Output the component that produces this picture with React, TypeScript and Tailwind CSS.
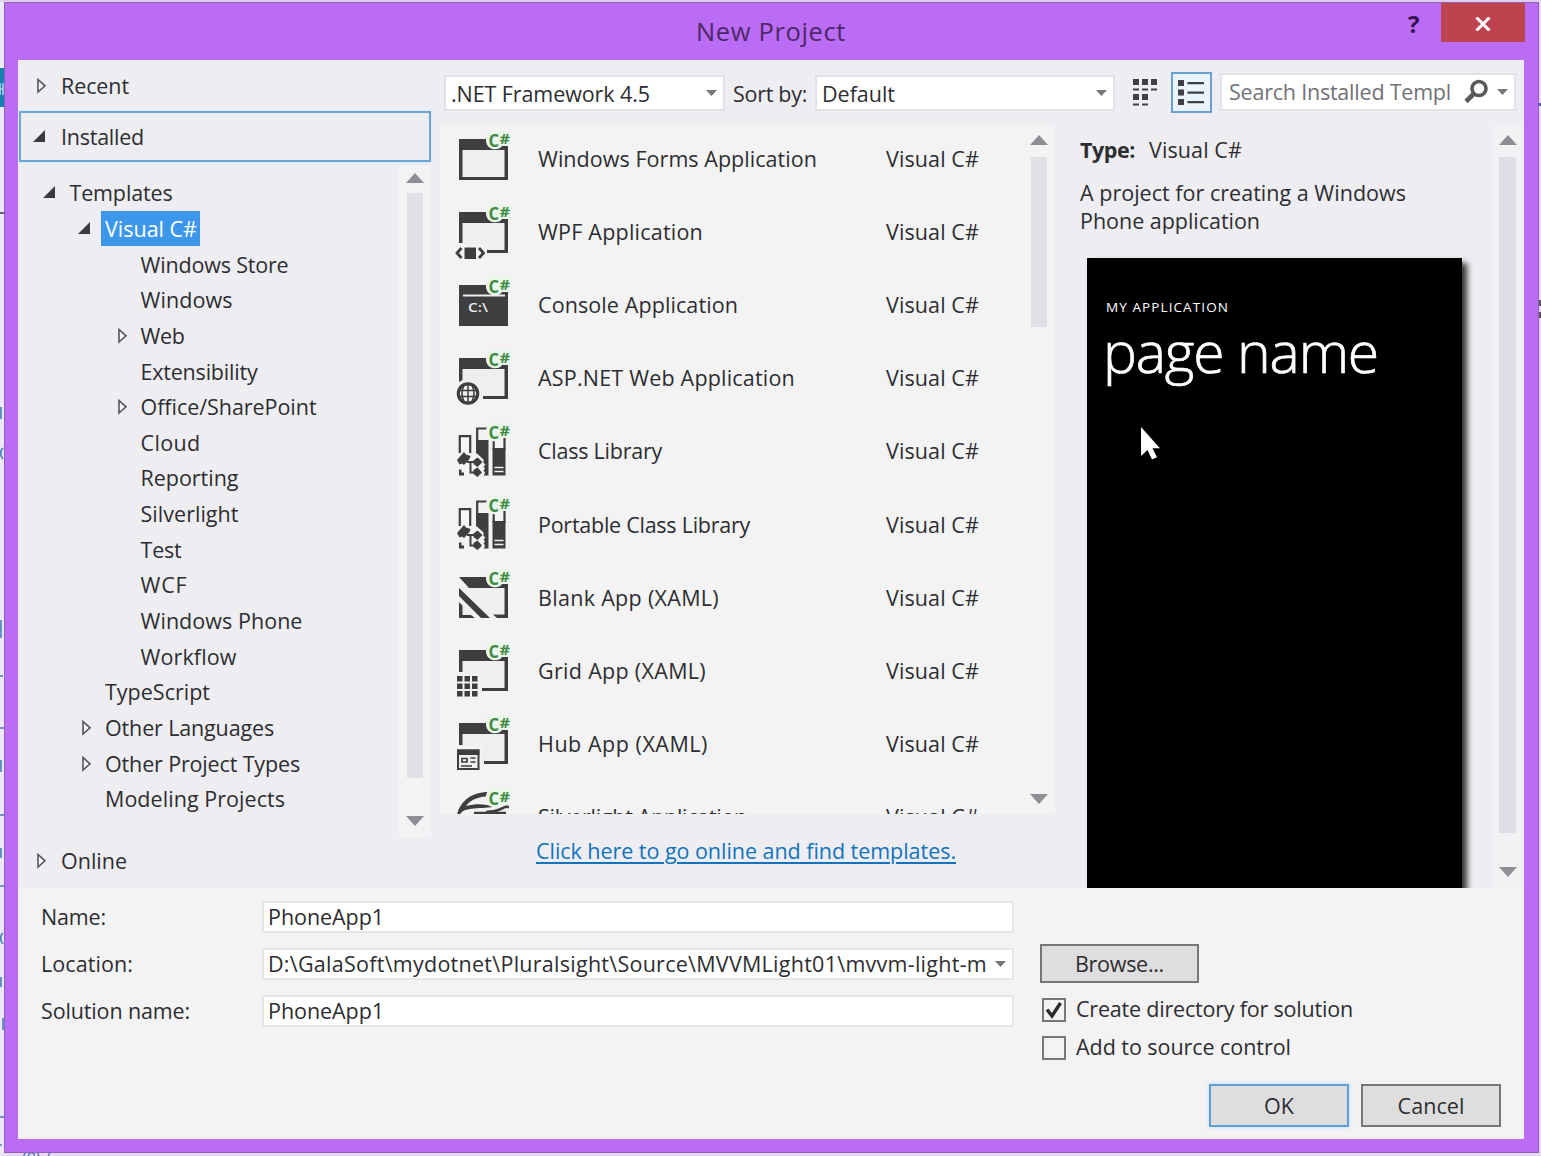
import { useLayoutEffect, useRef, type ReactNode } from "react";

/* Text whose tracking is tuned so that it fills a given width. */
function T({ w, className = "", children }: { w: number; className?: string; children: string }) {
  const ref = useRef<HTMLSpanElement>(null);
  useLayoutEffect(() => {
    const el = ref.current;
    if (!el) return;
    el.style.letterSpacing = "0px";
    const natural = el.getBoundingClientRect().width;
    el.style.letterSpacing = `${(w - natural) / children.length}px`;
  }, [w, children]);
  return (
    <span ref={ref} className={`inline-block shrink-0 whitespace-pre ${className}`}>
      {children}
    </span>
  );
}

function Twisty({ state }: { state?: "open" | "closed" }) {
  return (
    <svg width="28" height="16" viewBox="0 0 28 16" className="shrink-0">
      {state === "open" && <path d="M13 1v12H1z" fill="#3b3b3f" />}
      {state === "closed" && <path d="M6 1.500v12.500l7-6.200z" fill="#f6f6f8" stroke="#55555a" strokeWidth="1.600" />}
    </svg>
  );
}

function Arrow({ up = false }: { up?: boolean }) {
  return (
    <svg width="18" height="10" viewBox="0 0 18 10" className="shrink-0">
      <path d={up ? "M0 10L9 0l9 10z" : "M0 0h18L9 10z"} fill="#8e8e93" />
    </svg>
  );
}

function Caret() {
  return (
    <svg width="11" height="6" viewBox="0 0 11 6" className="shrink-0">
      <path d="M0 0h11L5.500 6z" fill="#77777b" />
    </svg>
  );
}

const DARK = "#3e3e40";

function Frame({ d }: { d: string }) {
  return (
    <>
      <path d="M5 9h49v41H5z" fill="#efeff0" />
      <path d={d} fill={DARK} />
    </>
  );
}

function Books() {
  return (
    <g>
      <path d="M5.800 31V14.200h10.400V31" fill="#f6f6f6" stroke={DARK} strokeWidth="2.200" />
      <path d="M23.200 20V6.500H34" fill="none" stroke={DARK} strokeWidth="2.200" />
      <path d="M22 18h12.500v35.500H22z" fill={DARK} />
      <path d="M39.700 28V14M50.500 28V14" stroke={DARK} strokeWidth="2.200" />
      <path d="M38.500 26h13v27.500h-13z" fill={DARK} />
      <path d="M40.500 45.500h9M40.500 49.500h9" stroke="#f3f3f4" strokeWidth="1.600" />
      <path d="M20 31.500h3l6.500 6v3.500l2 1.500-2 2 1.500 2-1.500 2 1.500 2-1.500 4H18z" fill="#f3f3f4" />
      <path d="M3 38l7-8 2 2.500 4.500 1.500-1 3-5.500 6-2-1.500-2.500 1z" fill={DARK} />
      <path d="M13 40h9M16.500 40v10.500H22" fill="none" stroke={DARK} strokeWidth="2" />
      <path d="M19.500 38.500l4-3 5 4.500-5 5-4-3zM19.500 48l4-2.500 4.500 5-4.500 4.500-4-3zM5 47.500h2.500v3H10v3H5z" fill={DARK} />
    </g>
  );
}

const GLYPHS: Record<string, ReactNode> = {
  forms: <Frame d="M5 9h49v41H5zM8.500 20v27h42V20z" />,
  wpf: (
    <>
      <Frame d="M5 9h49v41H33v-3h17.500V20h-42v20H5z" />
      <path d="M0 41h33v15H0z" fill="#f3f3f4" />
      <path d="M10.500 44.500h11.500V56H10.500z" fill={DARK} />
      <path d="M7.500 45l-4.500 5 4.500 5M25 45l4.500 5-4.500 5" fill="none" stroke={DARK} strokeWidth="2.800" />
    </>
  ),
  console: (
    <>
      <path d="M5 9h49v41H5z" fill={DARK} />
      <path d="M9 19.500h42" stroke="#eee" strokeWidth="1.800" />
      <text x="14" y="35.500" className="font-['Open_Sans'] text-[13px] font-semibold" fill="#ededed" textLength="20" lengthAdjust="spacingAndGlyphs">
        C:\
      </text>
    </>
  ),
  web: (
    <>
      <Frame d="M5 9h49v41H29v-3h21.500V20h-42v11L5 33z" />
      <circle cx="14" cy="44.500" r="13" fill="#f3f3f4" />
      <circle cx="14" cy="44.500" r="9.700" fill="#efeff0" stroke={DARK} strokeWidth="3.200" />
      <path d="M5 41.500h18M5 47.500h18M14 36v17M10 36.500c-2.500 5-2.500 11 0 16M18 36.500c2.500 5 2.500 11 0 16" fill="none" stroke={DARK} strokeWidth="1.500" />
    </>
  ),
  library: <Books />,
  blank: (
    <>
      <path d="M8 19h43v28H8z" fill="#efeff0" />
      <path d="M5 9h49v41H43l-4-3.500h11.500V20H15zM5 20l31 30h-9L5 28zM5 34l3.500 3.500V47H17l4 3H5z" fill={DARK} />
    </>
  ),
  grid: (
    <>
      <Frame d="M5 9h49v41H28v-3h22.500V20h-42v11H5z" />
      <path d="M0 33h26v25H0z" fill="#f3f3f4" />
      <path
        d="M3 35h5.500v5.500H3zM10.500 35H16v5.500h-5.500zM18 35h5.500v5.500H18zM3 42.500h5.500V48H3zM10.500 42.500H16V48h-5.500zM18 42.500h5.500V48H18zM3 50h5.500v5.500H3zM10.500 50H16v5.500h-5.500zM18 50h5.500v5.500H18z"
        fill={DARK}
      />
    </>
  ),
  hub: (
    <>
      <Frame d="M5 9h49v41H30v-3h20.500V20h-42v11H5z" />
      <path d="M0 32h28v26H0z" fill="#f3f3f4" />
      <path d="M4 36.500h20.500v18.500H4z" fill="#efeff0" stroke={DARK} strokeWidth="2" />
      <path d="M3 35.500h22.500V41H3z" fill={DARK} />
      <path d="M8 44.500h5v3.500H8zM16.500 44h5M16.500 48h5M7 52h11" fill="none" stroke={DARK} strokeWidth="1.700" />
    </>
  ),
  silverlight: (
    <>
      <path d="M3 27C6 13 18 4 34 4l-2 4.500C23 9 15 13 12 18c8-2 14-2 21-1l6 2-10 1c-8 0-16 1-20 3l-4 4z" fill={DARK} />
      <path d="M32 24c8 0 13-2 17-4 3-2 5-1 6-1M20 25h32" stroke={DARK} strokeWidth="2.600" fill="none" />
    </>
  ),
};

function TemplateIcon({ kind }: { kind: string }) {
  return (
    <svg width="60" height="60" viewBox="0 0 60 60" className="shrink-0 overflow-visible">
      {GLYPHS[kind]}
      <path d="M36 1h21v15h-9c-3 5-15 5-16-5 0-5 1-8 4-10z" fill="#ebf6ea" />
      <g className="font-['Open_Sans'] font-bold" fill="#3f8a45">
        <text x="34.500" y="16.500" className="text-[17.500px]" textLength="10.500" lengthAdjust="spacingAndGlyphs">
          C
        </text>
        <text x="45.500" y="13.500" className="text-[14px]" textLength="10.500" lengthAdjust="spacingAndGlyphs">
          #
        </text>
      </g>
    </svg>
  );
}

type Node = { label: string; w: number; pad: string; state?: "open" | "closed"; selected?: boolean };

const L0 = "pl-[23.500px]";
const L1 = "pl-[59px]";
const L2 = "pl-[94.500px]";

const TREE: Node[] = [
  { label: "Templates", w: 103, pad: L0, state: "open" },
  { label: "Visual C#", w: 92, pad: L1, state: "open", selected: true },
  { label: "Windows Store", w: 148, pad: L2 },
  { label: "Windows", w: 92, pad: L2 },
  { label: "Web", w: 44, pad: L2, state: "closed" },
  { label: "Extensibility", w: 117, pad: L2 },
  { label: "Office/SharePoint", w: 176, pad: L2, state: "closed" },
  { label: "Cloud", w: 60, pad: L2 },
  { label: "Reporting", w: 98, pad: L2 },
  { label: "Silverlight", w: 98, pad: L2 },
  { label: "Test", w: 41, pad: L2 },
  { label: "WCF", w: 47, pad: L2 },
  { label: "Windows Phone", w: 162, pad: L2 },
  { label: "Workflow", w: 96, pad: L2 },
  { label: "TypeScript", w: 105, pad: L1 },
  { label: "Other Languages", w: 169, pad: L1, state: "closed" },
  { label: "Other Project Types", w: 195, pad: L1, state: "closed" },
  { label: "Modeling Projects", w: 180, pad: L1 },
];

const TEMPLATES = [
  { label: "Windows Forms Application", w: 279, icon: "forms" },
  { label: "WPF Application", w: 165, icon: "wpf" },
  { label: "Console Application", w: 200, icon: "console" },
  { label: "ASP.NET Web Application", w: 257, icon: "web" },
  { label: "Class Library", w: 124, icon: "library" },
  { label: "Portable Class Library", w: 212, icon: "library" },
  { label: "Blank App (XAML)", w: 181, icon: "blank" },
  { label: "Grid App (XAML)", w: 168, icon: "grid" },
  { label: "Hub App (XAML)", w: 170, icon: "hub" },
  { label: "Silverlight Application", w: 209, icon: "silverlight" },
];

function Sidebar() {
  return (
    <div className="flex w-[422px] shrink-0 flex-col">
      <div className="flex h-[51px] items-center pl-[14px]">
        <Twisty state="closed" />
        <T w={68} className="ml-px">Recent</T>
      </div>
      <div className="ml-px flex h-[51px] w-[412px] items-center border-2 border-[#6ca5d6] pl-[11px] shadow-[0_0_3px_#c5e4ff]">
        <Twisty state="open" />
        <T w={83} className="ml-px">Installed</T>
      </div>
      <div className="flex h-[676px]">
        <div className="flex-1 pt-[13.500px]">
          {TREE.map((n) => (
            <div key={n.label} className={`flex h-[35.650px] items-center ${n.pad}`}>
              <Twisty state={n.state} />
              {n.selected ? (
                <div className="-ml-[4px] flex h-[35px] w-[99px] items-center bg-[#3c96ea] pl-[4px] text-white">
                  <T w={n.w}>{n.label}</T>
                </div>
              ) : (
                <T w={n.w}>{n.label}</T>
              )}
            </div>
          ))}
        </div>
        <div className="mt-1 mr-[9px] flex w-[32px] flex-col items-center bg-[#f3f3f5] pt-[7px]">
          <Arrow up />
          <div className="mt-[10px] h-[585px] w-[16px] bg-[#e0e0e5]" />
          <div className="mt-[38px] flex">
            <Arrow />
          </div>
        </div>
      </div>
      <div className="flex h-[46px] items-center pl-[14px]">
        <Twisty state="closed" />
        <T w={66} className="ml-px">Online</T>
      </div>
    </div>
  );
}

function Toolbar() {
  return (
    <div className="flex h-[65px] items-start pt-[12px] pl-[4px]">
      <div className="mt-[3px] flex h-[36px] w-[281px] items-center justify-between border-2 border-[#e0e0e6] bg-white pr-[6px] pl-[5px]">
        <T w={199} className="pt-px">.NET Framework 4.5</T>
        <Caret />
      </div>
      <T w={74} className="mt-[7px] ml-[8px] leading-[30px]">Sort by:</T>
      <div className="mt-[3px] ml-[8px] flex h-[36px] w-[300px] items-center justify-between border-2 border-[#e0e0e6] bg-white pr-[6px] pl-[5px]">
        <T w={73} className="pt-px">Default</T>
        <Caret />
      </div>
      <svg width="26" height="28" viewBox="0 0 26 28" className="mt-[7px] ml-[18px] shrink-0" fill="#3f3f44">
        <path d="M0 0h6v6H0zM9 0h6v6H9zM18 0h6v6h-6zM0 9.500h6v2H0zM9 9.500h6v2H9zM18 9.500h6v2h-6zM0 15h6v6H0zM9 15h6v6H9zM0 24.500h6v2H0zM9 24.500h6v2H9z" />
      </svg>
      <div className="ml-[12px] flex h-[41px] w-[41px] items-center justify-center border-2 border-[#6a9fd0] bg-[#eaf4fe]">
        <svg width="27" height="26" viewBox="0 0 27 26" fill="#3f3f44">
          <path d="M0 0h6v6H0zM0 9.500h6v6H0zM0 19h6v6H0zM9.500 2H26v2.200H9.500zM9.500 11.500H26v2.200H9.500zM9.500 21H26v2.200H9.500z" />
        </svg>
      </div>
      <div className="mt-px ml-[8px] flex h-[38px] w-[296px] items-center border-2 border-[#e2e2e8] bg-white pl-[7px] text-[#717176]">
        <T w={222}>Search Installed Templ</T>
        <svg width="26" height="26" viewBox="0 0 26 26" className="ml-[12px] shrink-0" fill="none" stroke="#5a5a5e">
          <circle cx="16" cy="9.500" r="7" strokeWidth="3.600" />
          <path d="M11 14.500L3 22.500" strokeWidth="4.600" />
        </svg>
        <div className="ml-[8px]">
          <Caret />
        </div>
      </div>
    </div>
  );
}

function TemplateList() {
  return (
    <div className="flex w-[615px] shrink-0 flex-col">
      <div className="flex h-[689px] overflow-hidden bg-[#f3f3f4]">
        <div className="-mt-[2px] w-[585px]">
          {TEMPLATES.map((t) => (
            <div key={t.label} className="flex h-[73.120px] items-center pl-[14px]">
              <TemplateIcon kind={t.icon} />
              <div className="-mt-px ml-[24px] w-[348px]">
                <T w={t.w}>{t.label}</T>
              </div>
              <T w={93} className="-mt-px">Visual C#</T>
            </div>
          ))}
        </div>
        <div className="flex w-[28px] flex-col items-center pt-[10px]">
          <Arrow up />
          <div className="mt-[12px] h-[170px] w-[16px] bg-[#dfdfe4]" />
          <div className="mt-[467px] flex">
            <Arrow />
          </div>
        </div>
      </div>
      <div className="flex h-[74px] items-center pl-[96px] text-[#1173bd]">
        <T w={420} className="underline decoration-2 underline-offset-[3px]">Click here to go online and find templates.</T>
      </div>
    </div>
  );
}

function Details() {
  return (
    <div className="flex flex-1 overflow-hidden">
      <div className="w-[437px] pt-[10px] pl-[25px]">
        <div className="flex h-[30px] items-center">
          <T w={55} className="font-bold">Type:</T>
          <T w={93} className="ml-[14px]">Visual C#</T>
        </div>
        <div className="mt-[14px] flex flex-col items-start leading-[28px]">
          <T w={326}>A project for creating a Windows</T>
          <T w={180}>Phone application</T>
        </div>
        <div className="relative mt-[23px] ml-[7px] flex h-[700px] w-[375px] flex-col items-start bg-black pl-[19px] text-white shadow-[5px_5px_6px_#333]">
          <T w={123} className="mt-[39px] text-[13.500px] leading-[20px]">MY APPLICATION</T>
          <T w={275} className="-mt-[3px] -ml-[3px] text-[57px] leading-[74px] font-light [-webkit-text-stroke:0.700px_white]">page name</T>
          <svg width="21" height="33" viewBox="0 0 21 33" className="absolute top-[169px] left-[54px]" fill="#fff">
            <path d="M0 0v29l6.500-6 4.500 9.500 5-2.200-4.500-9H19z" />
          </svg>
        </div>
      </div>
      <div className="flex w-[31px] flex-col items-center bg-[#f2f2f5] pt-[10px]">
        <Arrow up />
        <div className="mt-[12px] h-[676px] w-[17px] bg-[#dddee6]" />
        <div className="mt-[34px] flex">
          <Arrow />
        </div>
      </div>
    </div>
  );
}

function Field({ label, lw, value, vw, combo = false }: { label: string; lw: number; value: string; vw: number; combo?: boolean }) {
  return (
    <div className="flex h-[31px] items-center">
      <div className="w-[221px]">
        <T w={lw}>{label}</T>
      </div>
      <div className="flex h-[32px] w-[752px] items-center justify-between border-2 border-[#e6e6e8] bg-white pr-[6px] pl-[4px]">
        <T w={vw}>{value}</T>
        {combo && <Caret />}
      </div>
    </div>
  );
}

function CheckBox({ checked = false, label, w }: { checked?: boolean; label: string; w: number }) {
  return (
    <div className="flex h-[38px] items-center pl-[2px]">
      <div className="mt-[2px] flex size-[24px] items-center justify-center border-2 border-[#77777b] bg-[#f3f3f6]">
        {checked && (
          <svg width="18" height="18" viewBox="0 0 18 18" fill="none" stroke="#2b2b2e">
            <path d="M2 8.500l5 6.500L15.500 2" strokeWidth="3.400" />
          </svg>
        )}
      </div>
      <T w={w} className="ml-[10px]">{label}</T>
    </div>
  );
}

function Form() {
  return (
    <div className="flex h-[251px] flex-col bg-[#f3f3f4]">
      <div className="flex pt-[13px] pl-[23px]">
        <div className="flex flex-col gap-[16px]">
          <Field label="Name:" lw={65} value="PhoneApp1" vw={116} />
          <Field label="Location:" lw={92} value={"D:\\GalaSoft\\mydotnet\\Pluralsight\\Source\\MVVMLight01\\mvvm-light-m"} vw={719} combo />
          <Field label="Solution name:" lw={149} value="PhoneApp1" vw={116} />
        </div>
        <div className="ml-[26px] flex flex-col pt-[43px]">
          <button className="flex h-[39px] w-[159px] items-center justify-center border-2 border-[#75757a] bg-[#dedede]">
            <T w={89}>Browse...</T>
          </button>
          <div className="mt-[7px] flex flex-col">
            <CheckBox checked label="Create directory for solution" w={277} />
            <CheckBox label="Add to source control" w={215} />
          </div>
        </div>
      </div>
      <div className="mt-[18px] flex justify-end gap-[12px] pr-[23px]">
        <button className="flex h-[43px] w-[140px] items-center justify-center border-2 border-[#5f9fd6] bg-[#dedede] shadow-[0_0_4px_#b5ddff]">
          <T w={30}>OK</T>
        </button>
        <button className="flex h-[43px] w-[140px] items-center justify-center border-2 border-[#75757a] bg-[#dedede]">
          <T w={67}>Cancel</T>
        </button>
      </div>
    </div>
  );
}

/* Slivers of the editor window that stay visible beside the dialog. */
function LeftSliver() {
  return (
    <svg width="4" height="1153" viewBox="0 0 4 1153" className="shrink-0">
      <path d="M0 0h4v1153H0z" fill="#ece8f8" />
      <path d="M0 66h4v39H0z" fill="#1580b3" />
      <path d="M0 81v12M0 87h3M3 81v12" stroke="#d9eefa" strokeWidth="1.200" />
      <path d="M0 211h4" stroke="#333" strokeWidth="1.500" />
      <path d="M0 726h4M0 813h4M0 884h4M0 1115h4M0 1143h2M0 674h3" stroke="#5276b5" strokeWidth="1.500" />
      <path d="M1 846v10M1 975v10M3 931c-3 2-3 8 0 11M3 446c-3 2-3 8 0 11M1 618v18M3 1016v12M1 758v12M1 405v12" fill="none" stroke="#4a86c0" strokeWidth="1.700" />
    </svg>
  );
}

export default function App() {
  return (
    <div className="flex h-[1156px] w-[1541px] flex-col overflow-hidden bg-[#e9d9f8] font-['Open_Sans',sans-serif] text-[21.500px] leading-[30px] text-[#2d2d31]">
      <div className="h-[2px] shrink-0 bg-[#e0cdf0]" />
      <div className="flex h-[1151px] shrink-0">
        <LeftSliver />
        <div className="flex w-[1535px] flex-col border border-[#8f60b4] bg-[#bb6cf5] pr-[14px] pl-[13px]">
          <div className="flex h-[57px] shrink-0 items-start">
            <div className="flex flex-1 justify-center pt-[13px] pl-[116px] text-[25.500px] text-[#4c2869]">
              <T w={150}>New Project</T>
            </div>
            <div className="w-[32px] pt-[5px] text-[24px] leading-[32px] font-bold text-[#35104f]">?</div>
            <div className="-mr-px ml-px flex h-[39px] w-[84px] items-center justify-center bg-[#bd444f]">
              <svg width="16" height="14" viewBox="0 0 16 14" className="mt-[2px]">
                <path d="M1.500 0.500l13 13M14.500 0.500l-13 13" stroke="#fff" strokeWidth="3" />
              </svg>
            </div>
          </div>
          <div className="flex h-[1079px] shrink-0 flex-col">
            <div className="flex h-[828px] overflow-hidden bg-[#eeeef2]">
              <Sidebar />
              <div className="flex flex-1 flex-col">
                <Toolbar />
                <div className="flex h-[763px] overflow-hidden">
                  <TemplateList />
                  <Details />
                </div>
              </div>
            </div>
            <Form />
          </div>
        </div>
        <svg width="2" height="1151" viewBox="0 0 2 1151" className="shrink-0">
          <path d="M0 101h2v3H0z" fill="#3a62c0" />
          <path d="M0 298h2v6H0zM0 310h2v6H0z" fill="#555" />
        </svg>
      </div>
      <div className="flex h-[3px] shrink-0 overflow-hidden pl-[22px] text-[16px] leading-[10px] text-[#4a6fb0]">
        <span>(0) /</span>
      </div>
    </div>
  );
}
